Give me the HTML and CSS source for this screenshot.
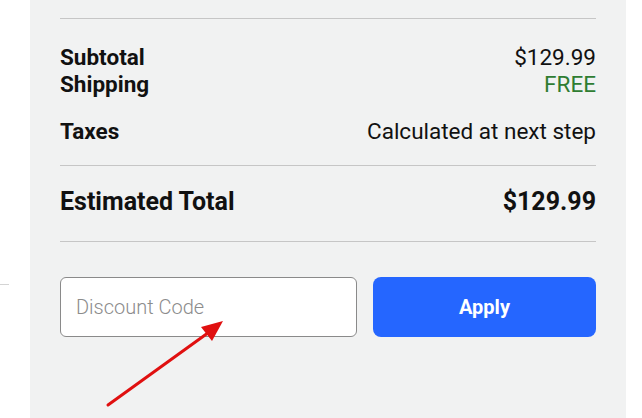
FILE: index.html
```html
<!DOCTYPE html>
<html lang="en">
<head>
    <meta charset="UTF-8">
    <meta name="viewport" content="width=device-width, initial-scale=1.0">
    <title>Order Summary</title>
    <link rel="stylesheet" href="styles.css">
</head>
<body>
    <div class="page">
        <aside class="side">
            <div class="side-rule"></div>
        </aside>

        <section class="summary">
            <div class="divider first"></div>

            <div class="rows">
                <div class="row">
                    <span class="label">Subtotal</span>
                    <span class="value">$129.99</span>
                </div>
                <div class="row">
                    <span class="label">Shipping</span>
                    <span class="value free">FREE</span>
                </div>
                <div class="row taxes">
                    <span class="label">Taxes</span>
                    <span class="value">Calculated at next step</span>
                </div>
            </div>

            <div class="divider"></div>

            <div class="row total">
                <span class="label">Estimated Total</span>
                <span class="value">$129.99</span>
            </div>

            <div class="divider"></div>

            <form class="discount" onsubmit="return false;">
                <input type="text" class="discount-input" placeholder="Discount Code">
                <button type="submit" class="apply">Apply</button>
            </form>

            <!-- annotation arrow pointing at the discount field -->
            <svg class="arrow" width="140" height="100" viewBox="0 0 140 100">
                <line x1="18" y1="93" x2="122" y2="18" stroke="#e01010" stroke-width="3" stroke-linecap="round"/>
                <polygon points="133,9 111,15 122,29" fill="#e01010"/>
            </svg>
        </section>
    </div>
</body>
</html>
```

FILE: styles.css
```css
body {
    font-family: 'Roboto', 'Liberation Sans', sans-serif;
    margin: 0;
    padding: 0;
    background-color: #fff;
    color: #111;
}
.page {
    display: flex;
    height: 418px;
    overflow: hidden;
}
.side {
    width: 30px;
    flex: none;
}
.side-rule {
    margin-top: 284px;
    width: 9px;
    height: 1px;
    background-color: #d4d4d4;
}
.summary {
    position: relative;
    width: 536px;
    padding: 0 30px;
    background-color: #f1f2f2;
}
.divider {
    height: 1px;
    background-color: #c6c6c6;
}
.divider.first {
    margin-top: 18px;
}
.rows {
    padding: 25px 0 20px;
}
.row {
    display: flex;
    justify-content: space-between;
    font-size: 22.5px;
    line-height: 27px;
}
.label {
    font-weight: 700;
}
.value {
    font-weight: 400;
}
.free {
    color: #2f7d32;
}
.row.taxes {
    margin-top: 20px;
}
.row.total {
    font-size: 25px;
    line-height: 30px;
    padding: 21px 0 24px;
}
.row.total .value {
    font-weight: 700;
}
.discount {
    display: flex;
    gap: 16px;
    margin-top: 35px;
}
.discount-input {
    width: 297px;
    height: 60px;
    box-sizing: border-box;
    padding: 0 15px;
    border: 1px solid #8a8a8a;
    border-radius: 6px;
    background-color: #fff;
    font-family: 'Roboto', 'Liberation Sans', sans-serif;
    font-size: 20px;
    font-weight: 300;
    color: #111;
}
.discount-input::placeholder {
    color: #8c8c8c;
}
.apply {
    flex: 1;
    height: 60px;
    border: none;
    border-radius: 8px;
    background-color: #2566ff;
    color: #fff;
    font-family: 'Roboto', 'Liberation Sans', sans-serif;
    font-size: 20px;
    font-weight: 700;
    cursor: pointer;
}
.apply:hover {
    background-color: #1d55dd;
}
.arrow {
    position: absolute;
    left: 60px;
    top: 312px;
}
```
